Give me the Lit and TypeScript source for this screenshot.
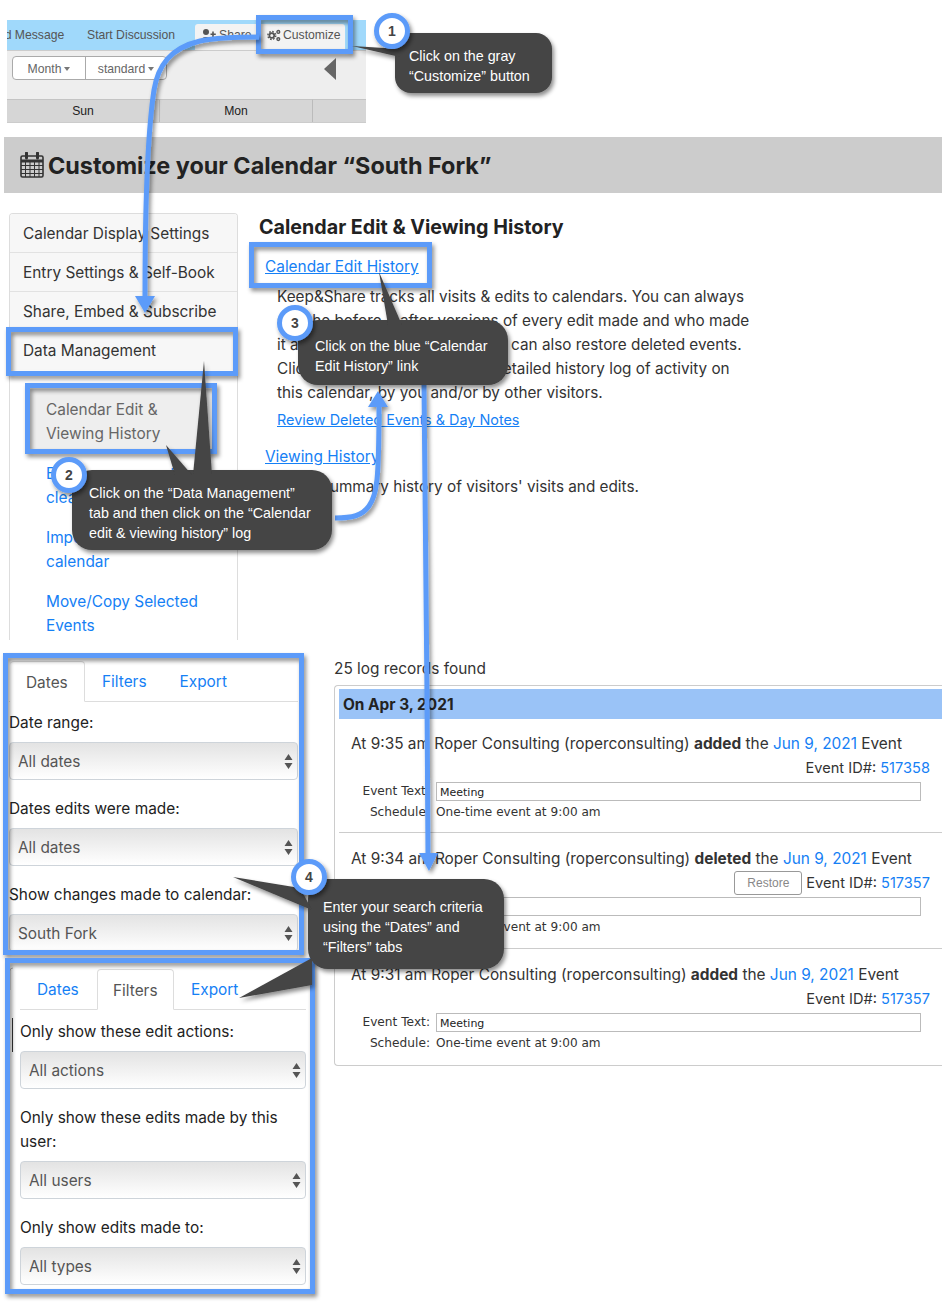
import { LitElement, html, css, svg } from "lit";
import { customElement } from "lit/decorators.js";

const BLUE = "#5b9bf9";
const DARK = "#444444";

const boxes = [
  [258.5, 17.5, 92, 34],
  [8.5, 329.5, 227, 44],
  [27.5, 385.5, 187, 66],
  [251.5, 244.5, 178, 41],
  [5.5, 655.5, 296, 297],
  [7.5, 960.5, 305, 331],
];

const arrows = [
  { d: "M259 37 C 235 37 215 38 200 41 C 170 48 158 66 154 90 C 148 130 145 190 145 296", head: "135,296 155,296 145,313" },
  { d: "M335 518 C 352 518 362 516 369 506 C 377 495 379 480 379 405", head: "368,407 388,407 378,391" },
  { d: "M424 385 C 424 500 428 700 428 855", head: "419,853 438,853 429,871" },
];

const callouts = [
  { x: 395, y: 33, w: 157, h: 60, r: 16, tails: ["352,46 400,49 400,57"] },
  { x: 72, y: 470, w: 260, h: 80, r: 20, tails: ["204,361 193,475 212,475", "166,445 175,475 192,475"] },
  { x: 298, y: 320, w: 210, h: 65, r: 20, tails: ["379,272 388,325 402,325"] },
  { x: 308, y: 879, w: 196, h: 90, r: 20, tails: ["233,877 300,888 312,910", "239,998 312,958 312,985"] },
];

const notes = [
  { n: "1", cx: 392, cy: 31, left: 409, top: 46, w: 140, lines: ["Click on the gray", "“Customize” button"] },
  { n: "2", cx: 69, cy: 475, left: 89, top: 483, w: 240, lines: ["Click on the “Data Management”", "tab and then click on the “Calendar", "edit & viewing history” log"] },
  { n: "3", cx: 295, cy: 323, left: 315, top: 336, w: 190, lines: ["Click on the blue “Calendar", "Edit History” link"] },
  { n: "4", cx: 309, cy: 877, left: 323, top: 897, w: 176, lines: ["Enter your search criteria", "using the “Dates” and", "“Filters” tabs"] },
];

const updown = html`<svg class="updown" width="9" height="15" viewBox="0 0 9 15"><path d="M4.5 0 L8.5 6 H0.5 Z M0.5 9 H8.5 L4.5 15 Z" fill="#555"/></svg>`;

@customElement("app-root")
export class AppRoot extends LitElement {
  static styles = css`
    :host { display: block; position: relative; width: 942px; height: 1305px; overflow: hidden; background: #fff;
      font-family: Inter, "Liberation Sans", sans-serif; font-size: 15.4px; line-height: 24px; color: #333; }
    a { color: #1580f5; text-decoration: none; }
    a.u { text-decoration: underline; }
    .page { display: flex; flex-direction: column; }

    .strip { margin: 20px 0 0 7px; width: 359px; height: 103px; overflow: hidden; font-family: "Liberation Sans", sans-serif; font-size: 12.2px; color: #555; box-sizing: border-box; border-bottom: 1px solid #ccc; }
    .strip-top { height: 30px; background: #a0d9fb; display: flex; align-items: center; position: relative; }
    .msg { margin-left: -24px; width: 96px; flex: none; white-space: nowrap; margin-right: 8px; padding-bottom: 1px; }
    .disc { width: 88px; flex: none; white-space: nowrap; padding-bottom: 1px; }
    .tbtn { margin-left: 20px; height: 26px; align-self: flex-end; background: #f3f3f3; display: flex; align-items: center; gap: 4px; padding: 0 5px 4px 6px; width: 150px; box-sizing: border-box; border-radius: 3px 3px 0 0; white-space: nowrap; overflow: hidden; }
    .share { width: 57px; flex: none; display: flex; gap: 3px; align-items: center; color: #555; }
    .cust { display: flex; align-items: center; gap: 2px; margin-left: 5px; }
    .toolbar { height: 49px; background: #eeeeee; border-top: 1px solid #ccc; box-sizing: border-box; padding: 5px 30px 0 5px; display: flex; justify-content: space-between; align-items: flex-start; }
    .bgroup { display: flex; height: 24px; border: 1px solid #aaa; border-radius: 4px; background: #fff; box-sizing: border-box; color: #666; width: 155px; }
    .bgroup span { display: flex; align-items: center; justify-content: center; gap: 3px; padding-top: 1px; }
    .bgroup span:first-child { width: 72px; border-right: 1px solid #aaa; }
    .bgroup span:last-child { flex: 1; }
    .caret { width: 0; height: 0; border: 3.5px solid transparent; border-top: 4px solid #777; border-bottom: 0; display: inline-block; }
    .prev { width: 0; height: 0; border: solid transparent; border-width: 11px 12px 11px 0; border-right-color: #666; margin-top: 2px; }
    .days { height: 23px; background: #d6d6d6; display: grid; grid-template-columns: 153px 153px 53px; color: #222; }
    .days span { text-align: center; line-height: 23px; border-right: 1px solid #bbb; border-top: 1px solid #c4c4c4; box-sizing: border-box; }
    .days span:last-child { border-right: 0; }

    .band { margin: 14px 0 20px 4px; height: 56px; background: #cccccc; display: flex; align-items: center; padding-left: 16px; gap: 4px; }
    .band h1 { margin: 2px 0 0; font-size: 23.4px; font-weight: 700; color: #222; white-space: nowrap; }

    .main { height: 427px; display: flex; }
    .side { margin-left: 9px; width: 229px; height: 427px; flex: none; overflow: hidden; box-sizing: border-box; border: 1px solid #ddd; border-bottom: 0; border-radius: 4px 4px 0 0; }
    .tab-row { height: 39px; box-sizing: border-box; background: #f7f7f7; border-bottom: 1px solid #e2e2e2; padding: 0 13px; line-height: 40px; white-space: nowrap; }
    .tab-row.last { border-bottom: 0; }
    .sub { padding: 19px 0 0 20px; }
    .sub div { padding: 9px 0 7px 16px; width: 182px; height: 64px; box-sizing: border-box; }
    .sub .cur { background: #eeeeee; color: #666; }
    .content { margin-left: 21px; flex: 1; }
    .content h2 { margin: 0 0 14px; font-size: 19.7px; line-height: 28px; font-weight: 700; color: #222; }
    .content p { margin: 0 0 0 18px; width: 490px; font-size: 15.3px; }
    .l1 { display: block; width: max-content; margin-left: 6px; }
    .m1 { margin-top: 6px !important; }
    .rev { display: block; margin: 3px 0 13px 18px; width: max-content; font-size: 14.4px; }

    .bottom { display: flex; }
    .filters { width: 334px; flex: none; }
    .fa { margin: 21px 0 17px 9px; width: 289px; }
    .fb { margin-left: 20px; width: 286px; }
    .tabs { display: flex; height: 41px; border-bottom: 1px solid #ddd; margin-bottom: 8px; box-sizing: border-box; }
    .fb .tabs { margin-bottom: 9px; }
    .tabs span { padding: 9px 16px 7px; box-sizing: border-box; height: 41px; color: #1580f5; }
    .tabs .on { color: #555; background: #fff; border: 1px solid #ddd; border-bottom-color: #fff; border-radius: 4px 4px 0 0; }
    .fa .tabs .on { margin-left: 1px; width: 75px; border-left: 0; }
    .fa .tabs span:nth-child(2) { margin-left: 1px; }
    .fa .tabs span:nth-child(3) { padding-left: 17px; }
    .fb .tabs span:first-child { width: 77px; padding-left: 17px; }
    .fb .tabs .on { width: 77px; padding-left: 15px; }
    .fb .tabs span:nth-child(3) { padding-left: 17px; }
    .group { margin-bottom: 16px; }
    .group label { display: block; padding-top: 1px; margin-bottom: 7px; color: #222; }
    .select { height: 38px; box-sizing: border-box; border: 1px solid #ced4da; border-radius: 4px; background: linear-gradient(#e3e3e3, #fff); color: #555; display: flex; align-items: center; justify-content: space-between; padding: 2px 4px 0 8px; }
    .updown { margin-top: -2px; }
    .fa .group:last-child { margin-bottom: 0; }

    .log { flex: 1; padding-top: 17px; min-width: 0; }
    .panel { margin-top: 4px; height: 381px; box-sizing: border-box; border: 1px solid #ccc; border-right: 0; border-radius: 4px 0 0 4px; padding: 3px 0 0 4px; }
    .dbar { height: 30px; background: #9ac3f7; font-weight: 700; color: #222; line-height: 32px; padding-left: 4px; }
    .entry { height: 114px; box-sizing: border-box; padding: 13px 12px 0; border-bottom: 1px solid #ccc; white-space: nowrap; color: #333; }
    .entry.b { height: 116px; padding-top: 14px; }
    .entry.c { border-bottom: 0; padding-top: 14px; }
    .meta { display: flex; justify-content: flex-end; align-items: center; gap: 4px; font-size: 14.6px; }
    .restore { height: 24px; width: 68px; box-sizing: border-box; border: 1px solid #999; border-radius: 3px; color: #888; font: 12px/22px "Liberation Sans", sans-serif; text-align: center; }
    .fields { display: grid; grid-template-columns: 79px 485px; column-gap: 6px; row-gap: 2px; font-family: "DejaVu Sans", sans-serif; font-size: 12.1px; line-height: 18px; margin-top: 2px; }
    .fields .k { text-align: right; color: #333; font-size: 12.2px; }
    .input { border: 1px solid #bbb; height: 19px; box-sizing: border-box; font-size: 11px; line-height: 19px; padding-left: 3px; color: #222; }

    .ann { position: absolute; left: 0; top: 0; pointer-events: none; }
    .note { position: absolute; color: #fff; font: 14.3px/20px "Liberation Sans", sans-serif; white-space: nowrap; }
    .note div { height: 20px; }
    .num { font: 700 14px "Liberation Sans", sans-serif; fill: #444; text-anchor: middle; dominant-baseline: central; }
  `;

  private entry(time: string, verb: string, date: string, id: string, cls: string, restore = false) {
    return html`<div class="entry ${cls}">
      <div>At ${time} Roper Consulting (roperconsulting) <b>${verb}</b> the <a>${date}</a> Event</div>
      <div class="meta">${restore ? html`<span class="restore">Restore</span>` : ""}<span>Event ID#: <a>${id}</a></span></div>
      <div class="fields">
        <span class="k">Event Text:</span><div class="input">Meeting</div>
        <span class="k">Schedule:</span><span>One-time event at 9:00 am</span>
      </div>
    </div>`;
  }

  private group(label: unknown, value: string) {
    return html`<div class="group"><label>${label}</label><div class="select"><span>${value}</span>${updown}</div></div>`;
  }

  render() {
    return html`<div class="page">
      <section class="strip">
        <div class="strip-top">
          <span class="msg">Send Message</span><span class="disc">Start Discussion</span>
          <div class="tbtn">
            <span class="share"><svg width="15" height="12" viewBox="0 0 15 12"><circle cx="5" cy="3" r="3" fill="#555"/><path d="M0 12 C0 6.5 10 6.5 10 12 Z" fill="#555"/><path d="M12 2.5 V8 M9.5 5.2 H14.8" stroke="#555" stroke-width="1.6"/></svg>Share</span>
            <span class="cust"><svg width="14" height="13" viewBox="0 0 14 13"><g fill="none" stroke="#555"><circle cx="4.8" cy="6.5" r="2.4" stroke-width="1.7"/><circle cx="4.8" cy="6.5" r="3.9" stroke-width="1.5" stroke-dasharray="1.6 1.45"/><circle cx="11.3" cy="2.9" r="1.4" stroke-width="1.4"/><circle cx="11.3" cy="10.1" r="1.4" stroke-width="1.4"/></g></svg>Customize</span>
          </div>
        </div>
        <div class="toolbar">
          <div class="bgroup"><span>Month <i class="caret"></i></span><span>standard <i class="caret"></i></span></div>
          <div class="prev"></div>
        </div>
        <div class="days"><span>Sun</span><span>Mon</span><span></span></div>
      </section>

      <header class="band">
        <svg width="24" height="26" viewBox="0 0 24 26"><path d="M1 5.5 Q1 4 2.5 4 H21.5 Q23 4 23 5.5 V23.5 Q23 25 21.5 25 H2.5 Q1 25 1 23.5 Z" fill="none" stroke="#333" stroke-width="1.6"/><path d="M1 9 H23" stroke="#333" stroke-width="3"/><path d="M1 13.5 H23 M1 17.5 H23 M1 21.5 H23 M5.5 10 V25 M10 10 V25 M14.5 10 V25 M19 10 V25" stroke="#333" stroke-width="1"/><path d="M6.5 1 V6 M17.5 1 V6" stroke="#333" stroke-width="3" stroke-linecap="round"/></svg>
        <h1>Customize your Calendar “South Fork”</h1>
      </header>

      <section class="main">
        <nav class="side">
          <div class="tab-row">Calendar Display Settings</div>
          <div class="tab-row">Entry Settings &amp; Self-Book</div>
          <div class="tab-row">Share, Embed &amp; Subscribe</div>
          <div class="tab-row last">Data Management</div>
          <div class="sub">
            <div class="cur">Calendar Edit &amp; Viewing History</div>
            <div><a>Erase some events, clear all</a></div>
            <div><a>Import events into calendar</a></div>
            <div><a>Move/Copy Selected Events</a></div>
          </div>
        </nav>
        <article class="content">
          <h2>Calendar Edit &amp; Viewing History</h2>
          <a class="u l1">Calendar Edit History</a>
          <p class="m1">Keep&amp;Share tracks all visits &amp; edits to calendars. You can always<br>see the before &amp; after versions of every edit made and who made<br>it and the time it was made. You can also restore deleted events.<br>Click on the link to see a very detailed history log of activity on<br>this calendar, by you and/or by other visitors.</p>
          <a class="u rev">Review Deleted Events &amp; Day Notes</a>
          <a class="u l1">Viewing History</a>
          <p class="m1">See a summary history of visitors' visits and edits.</p>
        </article>
      </section>

      <section class="bottom">
        <div class="filters">
          <div class="fa">
            <div class="tabs"><span class="on">Dates</span><span>Filters</span><span>Export</span></div>
            ${this.group("Date range:", "All dates")}
            ${this.group("Dates edits were made:", "All dates")}
            ${this.group("Show changes made to calendar:", "South Fork")}
          </div>
          <div class="fb">
            <div class="tabs"><span>Dates</span><span class="on">Filters</span><span>Export</span></div>
            ${this.group("Only show these edit actions:", "All actions")}
            ${this.group("Only show these edits made by this user:", "All users")}
            ${this.group("Only show edits made to:", "All types")}
          </div>
        </div>
        <div class="log">
          <div>25 log records found</div>
          <div class="panel">
            <div class="dbar">On Apr 3, 2021</div>
            ${this.entry("9:35 am", "added", "Jun 9, 2021", "517358", "a")}
            ${this.entry("9:34 am", "deleted", "Jun 9, 2021", "517357", "b", true)}
            ${this.entry("9:31 am", "added", "Jun 9, 2021", "517357", "c")}
          </div>
        </div>
      </section>
    </div>

    <svg class="ann" width="942" height="1305" viewBox="0 0 942 1305">
      <defs><filter id="sh" x="-20%" y="-20%" width="150%" height="150%"><feDropShadow dx="2" dy="3" stdDeviation="2" flood-color="#000" flood-opacity="0.45"/></filter></defs>
      <path d="M13 968 Q10 968 10 971 V990" fill="none" stroke="#bbb"/><path d="M12.5 1018 V1052" stroke="#333" stroke-width="1"/>
      ${boxes.map(([x, y, w, h]) => svg`<rect x=${x} y=${y} width=${w} height=${h} fill="none" stroke=${BLUE} stroke-width="5" filter="url(#sh)"/>`)}
      ${arrows.map((a) => svg`<g filter="url(#sh)"><path d=${a.d} fill="none" stroke=${BLUE} stroke-width="5"/><polygon points=${a.head} fill=${BLUE}/></g>`)}
      ${callouts.map((c) => svg`<g filter="url(#sh)" fill=${DARK}><rect x=${c.x} y=${c.y} width=${c.w} height=${c.h} rx=${c.r}/>${c.tails.map((t) => svg`<polygon points=${t}/>`)}</g>`)}
      ${notes.map((n) => svg`<g filter="url(#sh)"><circle cx=${n.cx} cy=${n.cy} r="15.5" fill="#fff" stroke=${BLUE} stroke-width="5"/></g><text class="num" x=${n.cx} y=${n.cy}>${n.n}</text>`)}
    </svg>
    ${notes.map((n) => html`<div class="note" style="left:${n.left}px;top:${n.top}px;width:${n.w}px">${n.lines.map((l) => html`<div>${l}</div>`)}</div>`)}
    `;
  }
}
